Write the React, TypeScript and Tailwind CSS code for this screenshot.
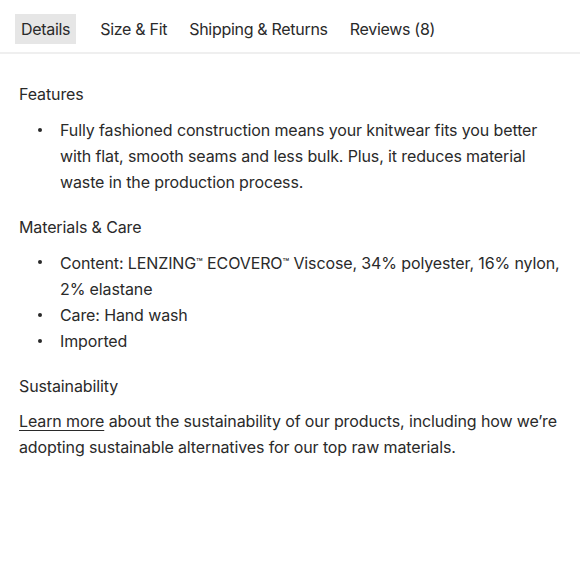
import { useState } from 'react'

const tabs = ['Details', 'Size & Fit', 'Shipping & Returns', 'Reviews (8)']

function Bullet({ children }: { children: React.ReactNode }) {
  return (
    <li className="flex">
      <span className="flex h-[26px] w-[41px] shrink-0 items-center justify-center">
        <span className="size-[4px] rounded-full bg-[#2a2a2a]" />
      </span>
      <span>{children}</span>
    </li>
  )
}

const Tm = () => <span className="align-[3px] text-[11px]">™</span>

export default function App() {
  const [active, setActive] = useState('Details')

  return (
    <div className="min-h-[580px] bg-white text-[#2a2a2a] font-['Inter','Liberation_Sans',sans-serif] tracking-[-0.12px]">
      <nav className="flex items-center gap-[10px] px-[15px] pt-[14px] pb-[8px] border-b-2 border-[#efefef]">
        {tabs.map((tab) => (
          <button
            key={tab}
            onClick={() => setActive(tab)}
            className={`h-[30px] px-[6px] text-[16px] leading-[30px] tracking-[-0.3px] first:mr-[8px] ${
              active === tab ? 'bg-[#e6e6e6]' : ''
            }`}
          >
            {tab}
          </button>
        ))}
      </nav>

      <main className="pl-[19px] pr-[8px] pt-[27px] text-[16px] leading-[26px]">
        <h3 className="mb-[10px]">Features</h3>
        <ul className="pr-[11px]">
          <Bullet>
            Fully fashioned construction means your knitwear fits you better with flat, smooth seams and less bulk.
            Plus, it reduces material waste in the production process.
          </Bullet>
        </ul>

        <h3 className="mt-[19px] mb-[9px]">Materials &amp; Care</h3>
        <ul>
          <Bullet>
            Content: LENZING
            <Tm /> ECOVERO
            <Tm /> Viscose, 34% polyester, 16% nylon, 2% elastane
          </Bullet>
          <Bullet>Care: Hand wash</Bullet>
          <Bullet>Imported</Bullet>
        </ul>

        <h3 className="mt-[19px] mb-[9px]">Sustainability</h3>
        <p className="pr-[11px]">
          <a href="#" className="underline underline-offset-[3px]">
            Learn more
          </a>{' '}
          about the sustainability of our products, including how we’re adopting sustainable alternatives for our top
          raw materials.
        </p>
      </main>
    </div>
  )
}
